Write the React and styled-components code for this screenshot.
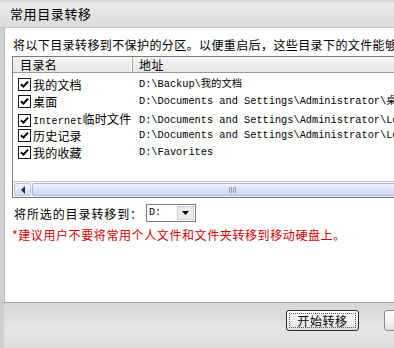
import React from 'react';
import styled, { createGlobalStyle } from 'styled-components';

const GlobalStyle = createGlobalStyle`
  html, body {
    margin: 0;
    padding: 0;
    overflow: hidden;
    background: #ffffff;
  }
`;

const cjk = `"Noto Sans CJK SC", "Noto Sans", sans-serif`;
const mono = `"Liberation Mono", "Noto Sans CJK SC", monospace`;

const folders = [
  { name: '我的文档', path: 'D:\\Backup\\我的文档' },
  { name: '桌面', path: 'D:\\Documents and Settings\\Administrator\\桌面' },
  { latin: 'Internet', name: '临时文件', path: 'D:\\Documents and Settings\\Administrator\\Local Settings' },
  { name: '历史记录', path: 'D:\\Documents and Settings\\Administrator\\Local Settings' },
  { name: '我的收藏', path: 'D:\\Favorites' },
];

const Window = styled.div`
  width: 394px;
  height: 348px;
  display: flex;
  flex-direction: column;
  overflow: hidden;
  font-family: ${cjk};
  font-size: 12px;
  color: #000;
  background: #d9d9d9;
`;

const TitleBar = styled.div`
  height: 27px;
  flex: none;
  display: flex;
  align-items: center;
  padding-left: 10px;
  font-size: 13px;
  letter-spacing: 0.6px;
  background: linear-gradient(#c9cdd3 0px, #ebebeb 3px, #e2e2e2 60%, #dcdcdc);
  border-bottom: 1px solid #c4c4c4;
`;

const Frame = styled.div`
  flex: 1;
  display: flex;
  padding-left: 4px;
  background: linear-gradient(90deg, #d2d2d2, #e0e0e0);
  min-height: 0;
`;

const Content = styled.div`
  flex: 1;
  min-width: 0;
  display: flex;
  flex-direction: column;
  background: #ffffff;
  border-left: 1px solid #b8b8b8;
  padding: 9px 0 0 7px;
  overflow: hidden;
`;

const Intro = styled.div`
  line-height: 16px;
  white-space: nowrap;
  letter-spacing: 0.4px;
  padding-left: 1px;
`;

const ListBox = styled.div`
  margin-top: 3px;
  width: 420px;
  height: 140px;
  border: 1px solid #7a7a7a;
  display: flex;
  flex-direction: column;
  background: #fff;
`;

const Header = styled.div`
  height: 15px;
  flex: none;
  display: grid;
  grid-template-columns: 120px 1fr;
  background: linear-gradient(#f6f6f6, #e6e6e6);
  border-bottom: 1px solid #9a9a9a;
`;

const HeaderCell = styled.div`
  display: flex;
  align-items: center;
  padding-left: ${({ $pad }) => $pad}px;
  line-height: 15px;
  letter-spacing: 0.4px;
  border-right: 1px solid #a8a8a8;
  box-shadow: inset -1px 0 0 #ffffff;
`;

const Rows = styled.div`
  flex: 1;
  padding-top: 3px;
`;

const Row = styled.div`
  height: 17px;
  display: grid;
  grid-template-columns: 120px 1fr;
  align-items: center;
  white-space: nowrap;
`;

const NameCell = styled.div`
  display: flex;
  align-items: center;
  gap: 2px;
  padding-left: 5px;
  line-height: 17px;
  letter-spacing: 0.2px;
`;

const Latin = styled.span`
  font-family: "Liberation Mono", monospace;
  font-size: 10px;
`;

const PathCell = styled.div`
  font-family: ${mono};
  font-size: 10.3px;
  padding-left: 6px;
  line-height: 17px;
`;

const Box = styled.span`
  width: 11px;
  height: 11px;
  flex: none;
  border: 1px solid #1a1a1a;
  background: #fff;
  display: inline-flex;
  align-items: center;
  justify-content: center;
`;

const HScroll = styled.div`
  height: 15px;
  flex: none;
  display: flex;
  border-top: 1px solid #c8c8c8;
  background: #f2f5fb;
`;

const ArrowButton = styled.div`
  width: 15px;
  flex: none;
  margin: 1px;
  border: 1px solid #b9c6dc;
  border-radius: 2px;
  background: linear-gradient(#f2f6fd, #d0dcf2);
  display: flex;
  align-items: center;
  justify-content: center;
`;

const Thumb = styled.div`
  flex: 1;
  margin: 1px 0;
  border: 1px solid #aebad0;
  border-radius: 2px;
  background: linear-gradient(#eef3fc, #c8d7f2);
  display: flex;
  align-items: center;
  padding-left: 196px;
`;

const Grip = styled.div`
  width: 8px;
  height: 6px;
  background: repeating-linear-gradient(90deg, #8c9cb8 0 1px, transparent 1px 2px);
`;

const TargetRow = styled.div`
  margin-top: 6px;
  display: flex;
  align-items: center;
  gap: 3px;
  padding-left: 2px;
  letter-spacing: 0.9px;
`;

const Combo = styled.div`
  width: 48px;
  height: 16px;
  border: 1px solid #7a7a7a;
  display: flex;
  align-items: stretch;
  background: #fff;
`;

const ComboValue = styled.div`
  flex: 1;
  font-family: "Liberation Mono", monospace;
  font-size: 10px;
  line-height: 16px;
  padding-left: 2px;
  letter-spacing: 0;
`;

const ComboButton = styled.div`
  width: 15px;
  margin: 1px;
  background: #ececec;
  border: 1px solid #cfcfcf;
  display: flex;
  align-items: center;
  justify-content: center;
`;

const Warning = styled.div`
  margin-top: 5px;
  color: #d40000;
  line-height: 16px;
  letter-spacing: 0.6px;
  white-space: nowrap;
`;

const Footer = styled.div`
  height: 38px;
  flex: none;
  display: flex;
  gap: 25px;
  align-items: flex-start;
  padding: 7px 0 0 282px;
  background: linear-gradient(#d6d6d6, #e6e6e6 60%, #dcdcdc);
  border-top: 1px solid #a9a9a9;
  border-left: 4px solid #cfcfcf;
`;

const Button = styled.button`
  width: ${({ $w }) => $w}px;
  height: 21px;
  flex: none;
  font-family: ${cjk};
  font-size: 12px;
  letter-spacing: 0.6px;
  padding: 0;
  color: #000;
  border: 1px solid ${({ $focus }) => ($focus ? '#2b2b2b' : '#8a8a8a')};
  border-radius: 3px;
  background: linear-gradient(#ffffff, #ededed 70%, #dedede);
  outline: ${({ $focus }) => ($focus ? '1px dotted #555' : 'none')};
  outline-offset: -4px;
`;

const CheckBox = () => (
  <Box>
    <svg width="9" height="9" viewBox="0 0 9 9">
      <path d="M1 4.2 L3.4 6.6 L8 1.6" fill="none" stroke="#000" strokeWidth="2" />
    </svg>
  </Box>
);

export default function App() {
  return (
    <>
      <GlobalStyle />
      <Window>
        <TitleBar>常用目录转移</TitleBar>
        <Frame>
          <Content>
            <Intro>将以下目录转移到不保护的分区。以便重启后，这些目录下的文件能够保留</Intro>
            <ListBox>
              <Header>
                <HeaderCell $pad={7}>目录名</HeaderCell>
                <HeaderCell $pad={6}>地址</HeaderCell>
              </Header>
              <Rows>
                {folders.map((f) => (
                  <Row key={f.name}>
                    <NameCell>
                      <CheckBox />
                      <span>
                        {f.latin && <Latin>{f.latin}</Latin>}
                        {f.name}
                      </span>
                    </NameCell>
                    <PathCell>{f.path}</PathCell>
                  </Row>
                ))}
              </Rows>
              <HScroll>
                <ArrowButton>
                  <svg width="6" height="8" viewBox="0 0 6 8">
                    <path d="M5 0 L1 4 L5 8 Z" fill="#1f2f4f" />
                  </svg>
                </ArrowButton>
                <Thumb>
                  <Grip />
                </Thumb>
              </HScroll>
            </ListBox>
            <TargetRow>
              <span>将所选的目录转移到：</span>
              <Combo>
                <ComboValue>D:</ComboValue>
                <ComboButton>
                  <svg width="7" height="4" viewBox="0 0 7 4">
                    <path d="M0 0 L7 0 L3.5 4 Z" fill="#000" />
                  </svg>
                </ComboButton>
              </Combo>
            </TargetRow>
            <Warning>*建议用户不要将常用个人文件和文件夹转移到移动硬盘上。</Warning>
          </Content>
        </Frame>
        <Footer>
          <Button $w={73} $focus>开始转移</Button>
          <Button $w={73}>取消</Button>
        </Footer>
      </Window>
    </>
  );
}
